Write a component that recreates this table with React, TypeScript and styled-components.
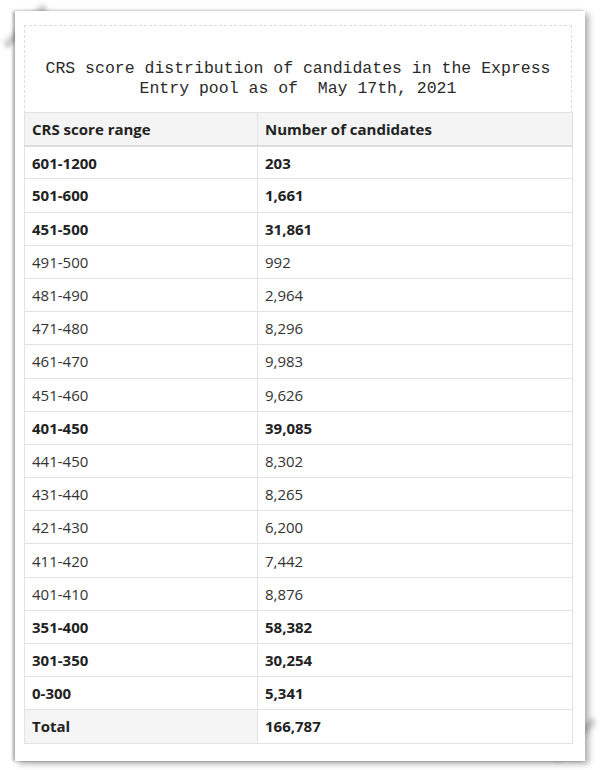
import styled, { createGlobalStyle } from 'styled-components';

const Global = createGlobalStyle`
  html, body { margin: 0; padding: 0; background: #fff; }
  body { width: 600px; height: 770px; overflow: hidden; }
`;

const Page = styled.div`
  width: 600px;
  height: 770px;
  padding: 11px 15px 9px 15px;
  box-sizing: border-box;
  position: relative;
  background: #fff;
`;

const Curl = styled.div<{ $corner: 'tl' | 'br' }>`
  position: absolute;
  width: 56px;
  height: 10px;
  z-index: 0;
  transform: rotate(-45deg);
  ${p => p.$corner === 'tl'
    ? 'left: -4px; top: 20px; background: linear-gradient(to bottom, rgba(255,255,255,0), rgba(0,0,0,0.3));'
    : 'right: -4px; bottom: 24px; background: linear-gradient(to top, rgba(255,255,255,0), rgba(0,0,0,0.28));'}
  filter: blur(2px);
`;

const Paper = styled.div`
  position: relative;
  z-index: 1;
  height: 100%;
  background: #fff;
  padding: 14px 13px 0 9px;
  box-sizing: border-box;
  box-shadow: -2px 0 3px rgba(0, 0, 0, 0.35), 4px 3px 6px rgba(0, 0, 0, 0.3);
`;

const Frame = styled.div`
  border: 1px dashed #dcdcdc;
  border-bottom: none;
  box-sizing: border-box;
`;

const Title = styled.h2`
  margin: 0;
  padding: 33px 0 13px;
  font-family: "Liberation Mono", monospace;
  font-weight: normal;
  font-size: 16.5px;
  line-height: 20px;
  color: #2a2a2a;
  text-align: center;
  white-space: pre;
`;

const Table = styled.table`
  width: 549px;
  margin: 0 0 -1px -1px;
  border-collapse: collapse;
  font-family: "Open Sans", sans-serif;
  font-size: 15px;
  color: #333;
`;

const Row = styled.tr<{ $strong?: boolean }>`
  height: 33.2px;
  font-weight: ${p => (p.$strong ? 700 : 400)};
  color: ${p => (p.$strong ? '#222' : '#333')};
`;

const Head = styled.th`
  background: #f4f4f4;
  text-align: left;
  font-weight: 700;
  color: #222;
  padding: 0 7px;
  border: 1px solid #e2e2e2;
  border-bottom: 2px solid #dcdcdc;
`;

const Cell = styled.td<{ $shade?: boolean }>`
  padding: 0 7px;
  border: 1px solid #e2e2e2;
  background: ${p => (p.$shade ? '#f5f5f5' : '#fff')};
  &:first-child { width: 218px; }
`;

const rows: [string, string, boolean][] = [
  ['601-1200', '203', true],
  ['501-600', '1,661', true],
  ['451-500', '31,861', true],
  ['491-500', '992', false],
  ['481-490', '2,964', false],
  ['471-480', '8,296', false],
  ['461-470', '9,983', false],
  ['451-460', '9,626', false],
  ['401-450', '39,085', true],
  ['441-450', '8,302', false],
  ['431-440', '8,265', false],
  ['421-430', '6,200', false],
  ['411-420', '7,442', false],
  ['401-410', '8,876', false],
  ['351-400', '58,382', true],
  ['301-350', '30,254', true],
  ['0-300', '5,341', true],
];

export default function App() {
  return (
    <Page>
      <Global />
      <Curl $corner="tl" />
      <Curl $corner="br" />
      <Paper>
        <Frame>
          <Title>{'CRS score distribution of candidates in the Express\nEntry pool as of  May 17th, 2021'}</Title>
          <Table>
            <thead>
              <Row $strong>
                <Head>CRS score range</Head>
                <Head>Number of candidates</Head>
              </Row>
            </thead>
            <tbody>
              {rows.map(([range, count, strong]) => (
                <Row key={range + count} $strong={strong}>
                  <Cell>{range}</Cell>
                  <Cell>{count}</Cell>
                </Row>
              ))}
              <Row $strong>
                <Cell $shade>Total</Cell>
                <Cell>166,787</Cell>
              </Row>
            </tbody>
          </Table>
        </Frame>
      </Paper>
    </Page>
  );
}
